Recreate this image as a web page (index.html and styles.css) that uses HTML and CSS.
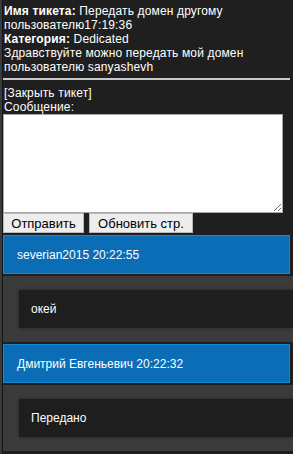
FILE: index.html
```html
<!DOCTYPE html>
<html lang="ru">
<head>
  <meta charset="UTF-8" />
  <title>Тикет</title>
  <link rel="stylesheet" href="styles.css">
</head>
<body>
  <div class="side-strip"></div>
  <div class="page">
    <div class="ticket-info">
      <div><b>Имя тикета:</b> Передать домен другому<br>пользователю17:19:36</div>
      <div><b>Категория:</b> Dedicated</div>
      <div>Здравствуйте можно передать мой домен пользователю sanyashevh</div>
    </div>
    <hr class="sep">

    <div class="close-link">[Закрыть тикет]</div>
    <label for="msg">Сообщение:</label>
    <textarea id="msg"></textarea>
    <div class="button-group">
      <button class="btn send-btn">Отправить</button>
      <button class="btn refresh-btn">Обновить стр.</button>
    </div>

    <div class="reply">
      <div class="reply-head">severian2015 20:22:55</div>
      <div class="reply-body">
        <div class="reply-text">окей</div>
      </div>
    </div>

    <div class="reply">
      <div class="reply-head">Дмитрий Евгеньевич 20:22:32</div>
      <div class="reply-body">
        <div class="reply-text">Передано</div>
      </div>
    </div>
  </div>
</body>
</html>
```

FILE: styles.css
```css
body {
  margin: 0;
  background-color: #1f1f1f;
  color: #ffffff;
  font-family: "Liberation Sans", Arial, sans-serif;
  font-size: 12px;
  display: flex;
  overflow: hidden;
}

.side-strip {
  width: 2px;
  flex-shrink: 0;
  background-color: #3a3a3a;
  border-right: 1px solid #141414;
  min-height: 454px;
}

.page {
  flex: 1;
  padding-top: 4px;
}

.ticket-info {
  padding-left: 1px;
  line-height: 14px;
  font-size: 12px;
  letter-spacing: 0.15px;
}

.sep {
  margin: 4px 3px 6px 0;
  border: none;
  height: 2px;
  background-color: #c8c8c8;
}

.close-link,
label {
  display: block;
  line-height: 14px;
  font-size: 12px;
  letter-spacing: 0.15px;
  padding-left: 1px;
}

textarea {
  display: block;
  width: 280px;
  height: 99px;
  box-sizing: border-box;
  margin: 0;
  border: 1px solid #a9a9a9;
  background-color: #ffffff;
}

.button-group {
  display: flex;
  gap: 5px;
  height: 20px;
}

.btn {
  height: 20px;
  padding: 0 7px;
  font-family: "Liberation Sans", Arial, sans-serif;
  font-size: 13px;
  color: #000;
  background-color: #ededed;
  border: 1px solid #b8b8b8;
  border-radius: 0;
}

.send-btn {
  width: 81px;
}

.refresh-btn {
  width: 104px;
}

.reply {
  margin-top: 2px;
}

.reply-head {
  width: 287px;
  height: 39px;
  box-sizing: border-box;
  display: flex;
  align-items: center;
  padding-left: 13px;
  background-color: #0a6db5;
  border: 1px solid #1588d6;
  font-size: 12px;
}

.reply-body {
  margin-top: 2px;
  height: 66px;
  box-sizing: border-box;
  padding: 14px 0 0 16px;
  background-color: #3b3b3b;
}

.reply-text {
  height: 38px;
  display: flex;
  align-items: center;
  padding-left: 12px;
  background-color: #1e1e1e;
  box-shadow: 0 0 4px rgba(0, 0, 0, 0.4);
  font-size: 12px;
}
```
